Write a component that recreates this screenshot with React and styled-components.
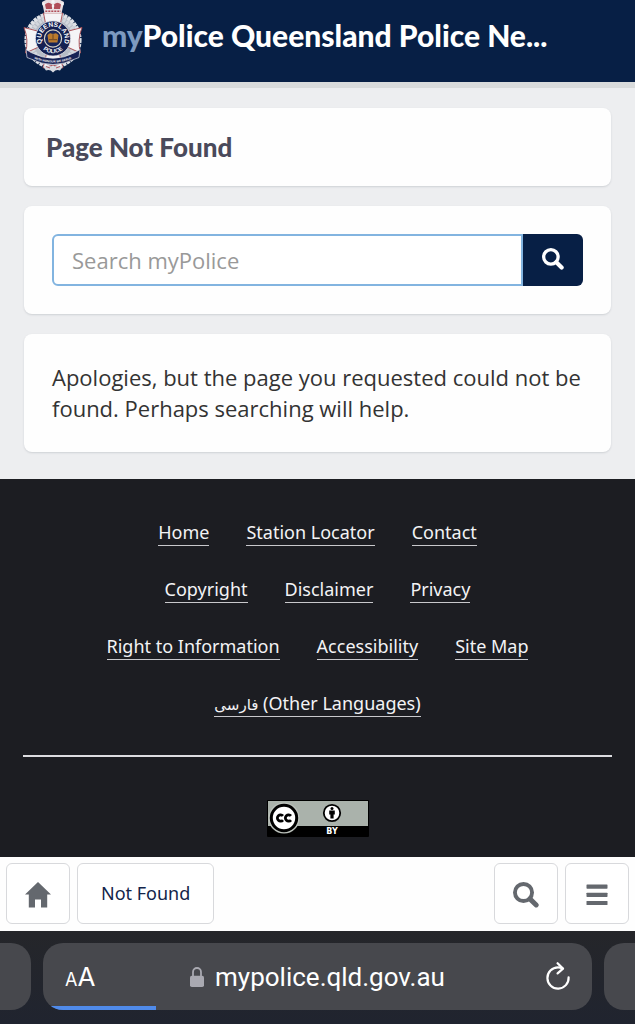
import React from 'react';
import styled, { createGlobalStyle } from 'styled-components';

const FOOTER_ROWS = [
  [{ label: 'Home' }, { label: 'Station Locator' }, { label: 'Contact' }],
  [{ label: 'Copyright' }, { label: 'Disclaimer' }, { label: 'Privacy' }],
  [{ label: 'Right to Information' }, { label: 'Accessibility' }, { label: 'Site Map' }],
  [{ native: 'فارسی', label: '(Other Languages)' }],
];

const SearchIcon = ({ size }) => (
  <svg width={size} height={size} viewBox="0 0 24 24" fill="none" stroke="currentColor" aria-hidden="true">
    <circle cx="9.7" cy="9.7" r="7.9" strokeWidth="3.6" />
    <path d="M15.6 15.6 L21.4 21.2" strokeWidth="4.6" strokeLinecap="round" />
  </svg>
);

const HomeIcon = () => (
  <svg width="26" height="26" viewBox="0 0 26 26" fill="currentColor" aria-hidden="true">
    <path d="M13 0 L26 12.6 H22.2 V25.5 H16 V17.5 H10 V25.5 H3.8 V12.6 H0 Z" />
  </svg>
);

const MenuIcon = () => (
  <svg width="22" height="22" viewBox="0 0 22 22" fill="currentColor" aria-hidden="true">
    <rect x="0.5" y="0.5" width="21" height="4.2" rx="0.6" />
    <rect x="0.5" y="8.7" width="21" height="4.2" rx="0.6" />
    <rect x="0.5" y="16.9" width="21" height="4.2" rx="0.6" />
  </svg>
);

const LockIcon = () => (
  <svg width="14" height="20" viewBox="0 0 14 20" aria-hidden="true">
    <path d="M3 9.5 V5 A4 4 0 0 1 11 5 V9.5" fill="none" stroke="#a9a9b1" strokeWidth="1.8" />
    <rect x="0" y="8.8" width="14" height="11.2" rx="1.8" fill="#a9a9b1" />
  </svg>
);

const ReloadIcon = () => (
  <svg width="24" height="30" viewBox="0 0 24 30" fill="none" stroke="#fff" strokeWidth="2.2" strokeLinecap="round" strokeLinejoin="round" aria-hidden="true">
    <path d="M16.4 6.4 Q14.4 5.4 12 5.4 A10.6 10.6 0 1 0 22.6 15.4" />
    <path d="M11.6 1.2 L17 6.6 L11.6 11.4" />
  </svg>
);

const PoliceBadge = () => (
  <svg width="60" height="73" viewBox="0 0 60 73" role="img" aria-label="Queensland Police">
    <defs>
      <path id="arcTop" d="M19.3 43.5 A11.8 11.8 0 1 1 40.7 43.5" />
      <path id="arcBottom" d="M15 38.5 A15 14.6 0 0 0 45 38.5" />
      <path id="arcRibbon" d="M5 56 Q30 69 55 56" />
    </defs>
    <circle cx="30" cy="40" r="27" fill="#b7bcc6" />
    <circle cx="30" cy="40" r="26.6" fill="none" stroke="#dfe1e6" strokeWidth="4" strokeDasharray="3.2 0.8" />
    <circle cx="30" cy="40" r="22.4" fill="none" stroke="#d3d6dc" strokeWidth="4" strokeDasharray="2.6 1" />
    <g fill="#f5f4f6" stroke="#a8474d" strokeWidth="0.9">
      <path d="M20.5 13 H39.5 L36 31 H24 Z" />
      <path d="M1 27.5 L20 32.5 V45 L2.5 53 Q6 40 1 27.5 Z" />
      <path d="M59 27.5 L40 32.5 V45 L57.5 53 Q54 40 59 27.5 Z" />
      <path d="M24 52 H36 L40 68 L30 65 L20 68 Z" />
    </g>
    <path d="M19 2 Q30 -5 41 2 L38.5 13.5 H21.5 Z" fill="#e9dfe2" />
    <path d="M22 4.5 Q25.5 1 29 4.5 V9 H23 Z M31 4.5 Q34.5 1 38 4.5 L37 9 H31 Z" fill="#b04d58" />
    <path d="M22.3 11.3 H37.7" stroke="#b04d58" strokeWidth="1.6" strokeDasharray="2 1" />
    <g fill="#f4f4f6">
      <circle cx="30" cy="1.8" r="1.8" />
      <circle cx="30" cy="6" r="1.3" />
      <circle cx="20.5" cy="4" r="1.4" />
      <circle cx="39.5" cy="4" r="1.4" />
    </g>
    <circle cx="30" cy="38.5" r="17.6" fill="#152052" stroke="#e4e5ea" strokeWidth="0.8" />
    <circle cx="30" cy="38.5" r="8.6" fill="#17255a" stroke="#d8d4c4" strokeWidth="1.2" />
    <path d="M24.5 35.2 Q27 32 29.6 34.4 L30 32.2 L30.4 34.4 Q33 32 35.5 35.2 L34.4 42.5 H25.6 Z" fill="#ba7b2d" />
    <path d="M26 39.7 H34 M30 34.8 V39" stroke="#654121" strokeWidth="0.9" />
    <path d="M3 49.5 L8 52.5 Q30 64 52 52.5 L57 49.5 L56 57.5 L52 59 Q30 70 8 59 L4 57.5 Z" fill="#172254" stroke="#e0e1e7" strokeWidth="0.7" />
    <g fill="#fff" fontFamily="Liberation Sans, sans-serif" fontWeight="700" textAnchor="middle">
      <text fontSize="6.6"><textPath href="#arcTop" startOffset="50%">QUEENSLAND</textPath></text>
      <text fontSize="5.8"><textPath href="#arcBottom" startOffset="50%">POLICE</textPath></text>
      <text fontSize="3"><textPath href="#arcRibbon" startOffset="50%">WITH HONOUR WE SERVE</textPath></text>
    </g>
    <path d="M20 66.5 Q25 64.5 30 67.5 Q35 64.5 40 66.5 L37 70.5 Q33 69 30 72.5 Q27 69 23 70.5 Z" fill="#d9dbe1" />
    <path d="M23 66.5 L27 68 M37 66.5 L33 68" stroke="#ab4c52" strokeWidth="0.9" />
  </svg>
);

const LicenceBadge = () => (
  <svg width="102" height="37" viewBox="0 0 102 37" role="img" aria-label="Creative Commons Attribution">
    <rect width="102" height="37" rx="1" fill="#000" />
    <rect x="1" y="1" width="100" height="25" fill="#aab2ab" />
    <circle cx="17" cy="18" r="15.6" fill="#bcc2bc" />
    <circle cx="17" cy="18" r="12.7" fill="#fff" stroke="#000" strokeWidth="3" />
    <g fill="none" stroke="#000" strokeWidth="2.8">
      <path d="M16 15.9 A3.2 3.2 0 1 0 16 20.1" />
      <path d="M24 15.9 A3.2 3.2 0 1 0 24 20.1" />
    </g>
    <circle cx="65" cy="13" r="8.2" fill="#fff" stroke="#000" strokeWidth="1.8" />
    <circle cx="65" cy="8.4" r="1.5" />
    <path d="M62.2 10.6 H67.8 V14.6 H66.6 V18.6 H63.4 V14.6 H62.2 Z" />
    <text x="65" y="34.4" textAnchor="middle" fontFamily="DejaVu Sans, sans-serif" fontWeight="700" fontSize="8" fill="#fff">BY</text>
  </svg>
);

const App = () => {
  return (
    <>
      <GlobalStyle />
      <Page>
        <Header>
          <PoliceBadge />
          <SiteTitle href="#"><span>my</span>Police Queensland Police Ne...</SiteTitle>
        </Header>

        <Main>
          <TitleCard>
            <h1>Page Not Found</h1>
          </TitleCard>
          <Card>
            <SearchForm onSubmit={(e) => e.preventDefault()}>
              <SearchInput type="text" placeholder="Search myPolice" aria-label="Search myPolice" />
              <SearchButton type="submit" aria-label="Search">
                <SearchIcon size={22} />
              </SearchButton>
            </SearchForm>
          </Card>
          <Card>
            <Message>Apologies, but the page you requested could not be found. Perhaps searching will help.</Message>
          </Card>
        </Main>

        <Footer>
          {FOOTER_ROWS.map((row) => (
            <FooterRow key={row[0].label}>
              {row.map(({ label, native }) => (
                <FooterLink key={label} href="#">
                  {native && <NativeName lang="fa">{native}</NativeName>}
                  {native && ' '}
                  {label}
                </FooterLink>
              ))}
            </FooterRow>
          ))}
          <Divider />
          <LicenceLink href="#">
            <LicenceBadge />
          </LicenceLink>
        </Footer>

        <Toolbar>
          <ToolButton aria-label="Home"><HomeIcon /></ToolButton>
          <ToolButton $wide>Not Found</ToolButton>
          <Spacer />
          <ToolButton aria-label="Search"><SearchIcon size={26} /></ToolButton>
          <ToolButton aria-label="Menu"><MenuIcon /></ToolButton>
        </Toolbar>

        <BrowserBar>
          <SideTab $side="left" />
          <AddressBar>
            <TextSizeButton aria-label="Text size"><small>A</small>A</TextSizeButton>
            <Address>
              <LockIcon />
              mypolice.qld.gov.au
            </Address>
            <ReloadButton aria-label="Reload"><ReloadIcon /></ReloadButton>
            <Progress />
          </AddressBar>
          <SideTab $side="right" />
        </BrowserBar>
      </Page>
    </>
  );
};

const GlobalStyle = createGlobalStyle`
  * {
    box-sizing: border-box;
  }

  body {
    margin: 0;
    background: #edeef0;
    color: #333;
    font-family: "Noto Sans", "DejaVu Sans", sans-serif;
  }

  button,
  input {
    font-family: inherit;
  }
`;

const Page = styled.div`
  display: flex;
  flex-direction: column;
  min-height: 100vh;
`;

const Header = styled.header`
  display: flex;
  align-items: flex-start;
  gap: 19px;
  height: 88px;
  padding: 0 23px;
  background: #071f45;
  border-bottom: 6px solid #d9dbdc;
`;

const SiteTitle = styled.a`
  padding-top: 15px;
  color: #fff;
  font-family: Lato, sans-serif;
  font-size: 30px;
  font-weight: 900;
  line-height: 40px;
  text-decoration: none;
  white-space: nowrap;

  span {
    color: #7d9ac0;
  }
`;

const Main = styled.main`
  display: flex;
  flex: 1;
  flex-direction: column;
  gap: 20px;
  padding: 20px 24px 27px;
`;

const Card = styled.section`
  padding: 28px;
  background: #fefefe;
  border-radius: 8px;
  box-shadow: 0 1px 2px #cfd1d5;
`;

const TitleCard = styled(Card)`
  padding: 20px 22px;

  h1 {
    margin: 0;
    color: #4a4a5b;
    font-family: Lato, sans-serif;
    font-size: 26px;
    font-weight: 900;
    line-height: 38px;
  }
`;

const SearchForm = styled.form`
  display: flex;
  height: 52px;
`;

const SearchInput = styled.input`
  flex: 1;
  min-width: 0;
  padding: 0 18px;
  color: #333;
  font-family: "Open Sans", sans-serif;
  font-size: 22px;
  background: #fff;
  border: 2px solid #82b4e0;
  border-radius: 6px 0 0 6px;
  outline: none;

  &::placeholder {
    color: #999;
  }
`;

const SearchButton = styled.button`
  display: flex;
  justify-content: center;
  width: 60px;
  padding: 14px 0 0;
  color: #fff;
  background: #071f45;
  border: 0;
  border-radius: 0 6px 6px 0;
  cursor: pointer;
`;

const Message = styled.p`
  margin: 0;
  font-family: "Open Sans", sans-serif;
  font-size: 22px;
  line-height: 31px;
`;

const Footer = styled.footer`
  display: flex;
  flex-direction: column;
  padding: 26px 23px 20px;
  background: #1c1d22;
`;

const FooterRow = styled.nav`
  display: flex;
  justify-content: center;
  gap: 37px;
  height: 57px;
  padding-top: 14px;
`;

const FooterLink = styled.a`
  height: 27px;
  color: #f3f3f5;
  font-size: 18px;
  line-height: 26px;
  text-decoration: none;
  white-space: nowrap;
  border-bottom: 1px solid #c8c8cc;
`;

const NativeName = styled.span`
  font-size: 15px;
`;

const Divider = styled.hr`
  width: 100%;
  height: 2px;
  margin: 22px 0 43px;
  background: #dcdce0;
  border: 0;
`;

const LicenceLink = styled.a`
  display: flex;
  align-self: center;
`;

const Toolbar = styled.nav`
  display: flex;
  gap: 7px;
  padding: 6px 6px 7px;
  background: #fefefe;
`;

const ToolButton = styled.button`
  display: flex;
  align-items: center;
  justify-content: center;
  width: ${({ $wide }) => ($wide ? 'auto' : '64px')};
  height: 61px;
  padding: ${({ $wide }) => ($wide ? '0 23px 2px' : '3px 0 0')};
  color: ${({ $wide }) => ($wide ? '#13254a' : '#64686e')};
  font-size: 18px;
  background: #fff;
  border: 1px solid #d8d9dc;
  border-radius: 6px;
  cursor: pointer;
`;

const Spacer = styled.div`
  flex: 1;
`;

const BrowserBar = styled.div`
  display: flex;
  gap: 12px;
  padding: 12px 0 14px;
  background: linear-gradient(#25262a, #20242f);
`;

const SideTab = styled.div`
  width: 31px;
  background: #47484d;
  border-radius: ${({ $side }) => ($side === 'left' ? '0 20px 20px 0' : '20px 0 0 20px')};
`;

const AddressBar = styled.div`
  position: relative;
  display: flex;
  flex: 1;
  align-items: center;
  justify-content: space-between;
  height: 67px;
  padding: 0 22px;
  overflow: hidden;
  color: #fff;
  background: #47484d;
  border-radius: 20px;
`;

const TextSizeButton = styled.button`
  width: 36px;
  padding: 0;
  color: inherit;
  font-family: Inter, sans-serif;
  font-size: 26px;
  text-align: left;
  white-space: nowrap;
  background: none;
  border: 0;

  small {
    font-size: 18px;
  }
`;

const Address = styled.div`
  display: flex;
  align-items: center;
  gap: 11px;
  font-family: Roboto, sans-serif;
  font-size: 26px;
  line-height: 36px;
`;

const ReloadButton = styled.button`
  display: flex;
  justify-content: flex-end;
  width: 36px;
  padding: 0;
  background: none;
  border: 0;
`;

const Progress = styled.div`
  position: absolute;
  bottom: 0;
  left: 0;
  width: 113px;
  height: 4px;
  background: #508bea;
`;

export default App;
